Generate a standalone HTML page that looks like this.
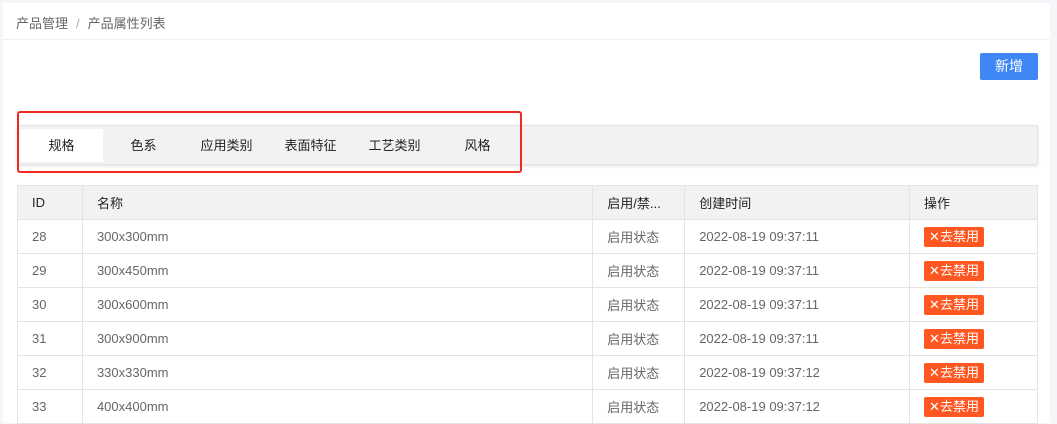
<!DOCTYPE html>
<html><head><meta charset="utf-8"><style>
*{margin:0;padding:0;box-sizing:border-box}
body{width:1057px;height:409px;overflow:hidden;background:#f4f6fa;font-family:"Liberation Sans","Noto Sans CJK SC",sans-serif;font-size:13px;color:#333;position:relative}
.panel{position:absolute;left:3px;top:3px;width:1047px;height:420px;background:#fff}
.bc{position:absolute;left:16px;top:13px;color:#666;font-size:13px}
.bc .s{color:#aaa;margin:0 8px}
.hl{position:absolute;left:3px;top:39px;width:1047px;height:1px;background:#eef0f3}
.btn{position:absolute;left:980px;top:53px;width:58px;height:27px;background:#3f87f5;color:#fff;border-radius:2px;text-align:center;line-height:27px;font-size:14px}
.tabs{position:absolute;left:17px;top:125px;width:1021px;height:40px;background:#f2f2f2;border:1px solid #e4e4e4;box-shadow:0 1px 3px rgba(0,0,0,.12)}
.tab{position:absolute;top:3px;height:33px;line-height:33px;text-align:center;width:83px;color:#222}
.tab.a{background:#fff}
.red{position:absolute;left:17px;top:111px;width:505px;height:62px;border:2px solid #f02a1e;border-radius:3px}
table{position:absolute;left:17px;top:185px;border-collapse:collapse;width:1021px}
td,th{border:1px solid #e4e4e4;height:34px;padding:0 0 0 14px;text-align:left;font-weight:normal;color:#666;white-space:nowrap}
th{background:#f2f2f2;color:#222}
.tag{display:inline-block;background:#ff5722;color:#fff;height:20px;line-height:20px;padding:0 5px;border-radius:2px;font-size:13px}
</style></head><body>
<div class="panel"></div>
<div class="bc">产品管理<span class="s">/</span>产品属性列表</div>
<div class="hl"></div>
<div class="btn">新增</div>
<div class="tabs">
<div class="tab a" style="left:2px">规格</div>
<div class="tab" style="left:84px">色系</div>
<div class="tab" style="left:167px">应用类别</div>
<div class="tab" style="left:251px">表面特征</div>
<div class="tab" style="left:335px">工艺类别</div>
<div class="tab" style="left:418px">风格</div>
</div>
<div class="red"></div>
<table>
<colgroup><col style="width:65px"><col style="width:511px"><col style="width:92px"><col style="width:225px"><col style="width:128px"></colgroup>
<tr><th>ID</th><th>名称</th><th>启用/禁...</th><th>创建时间</th><th>操作</th></tr>
<tr><td>28</td><td>300x300mm</td><td>启用状态</td><td>2022-08-19 09:37:11</td><td><span class="tag">✕去禁用</span></td></tr>
<tr><td>29</td><td>300x450mm</td><td>启用状态</td><td>2022-08-19 09:37:11</td><td><span class="tag">✕去禁用</span></td></tr>
<tr><td>30</td><td>300x600mm</td><td>启用状态</td><td>2022-08-19 09:37:11</td><td><span class="tag">✕去禁用</span></td></tr>
<tr><td>31</td><td>300x900mm</td><td>启用状态</td><td>2022-08-19 09:37:11</td><td><span class="tag">✕去禁用</span></td></tr>
<tr><td>32</td><td>330x330mm</td><td>启用状态</td><td>2022-08-19 09:37:12</td><td><span class="tag">✕去禁用</span></td></tr>
<tr><td>33</td><td>400x400mm</td><td>启用状态</td><td>2022-08-19 09:37:12</td><td><span class="tag">✕去禁用</span></td></tr>
</table>
</body></html>
